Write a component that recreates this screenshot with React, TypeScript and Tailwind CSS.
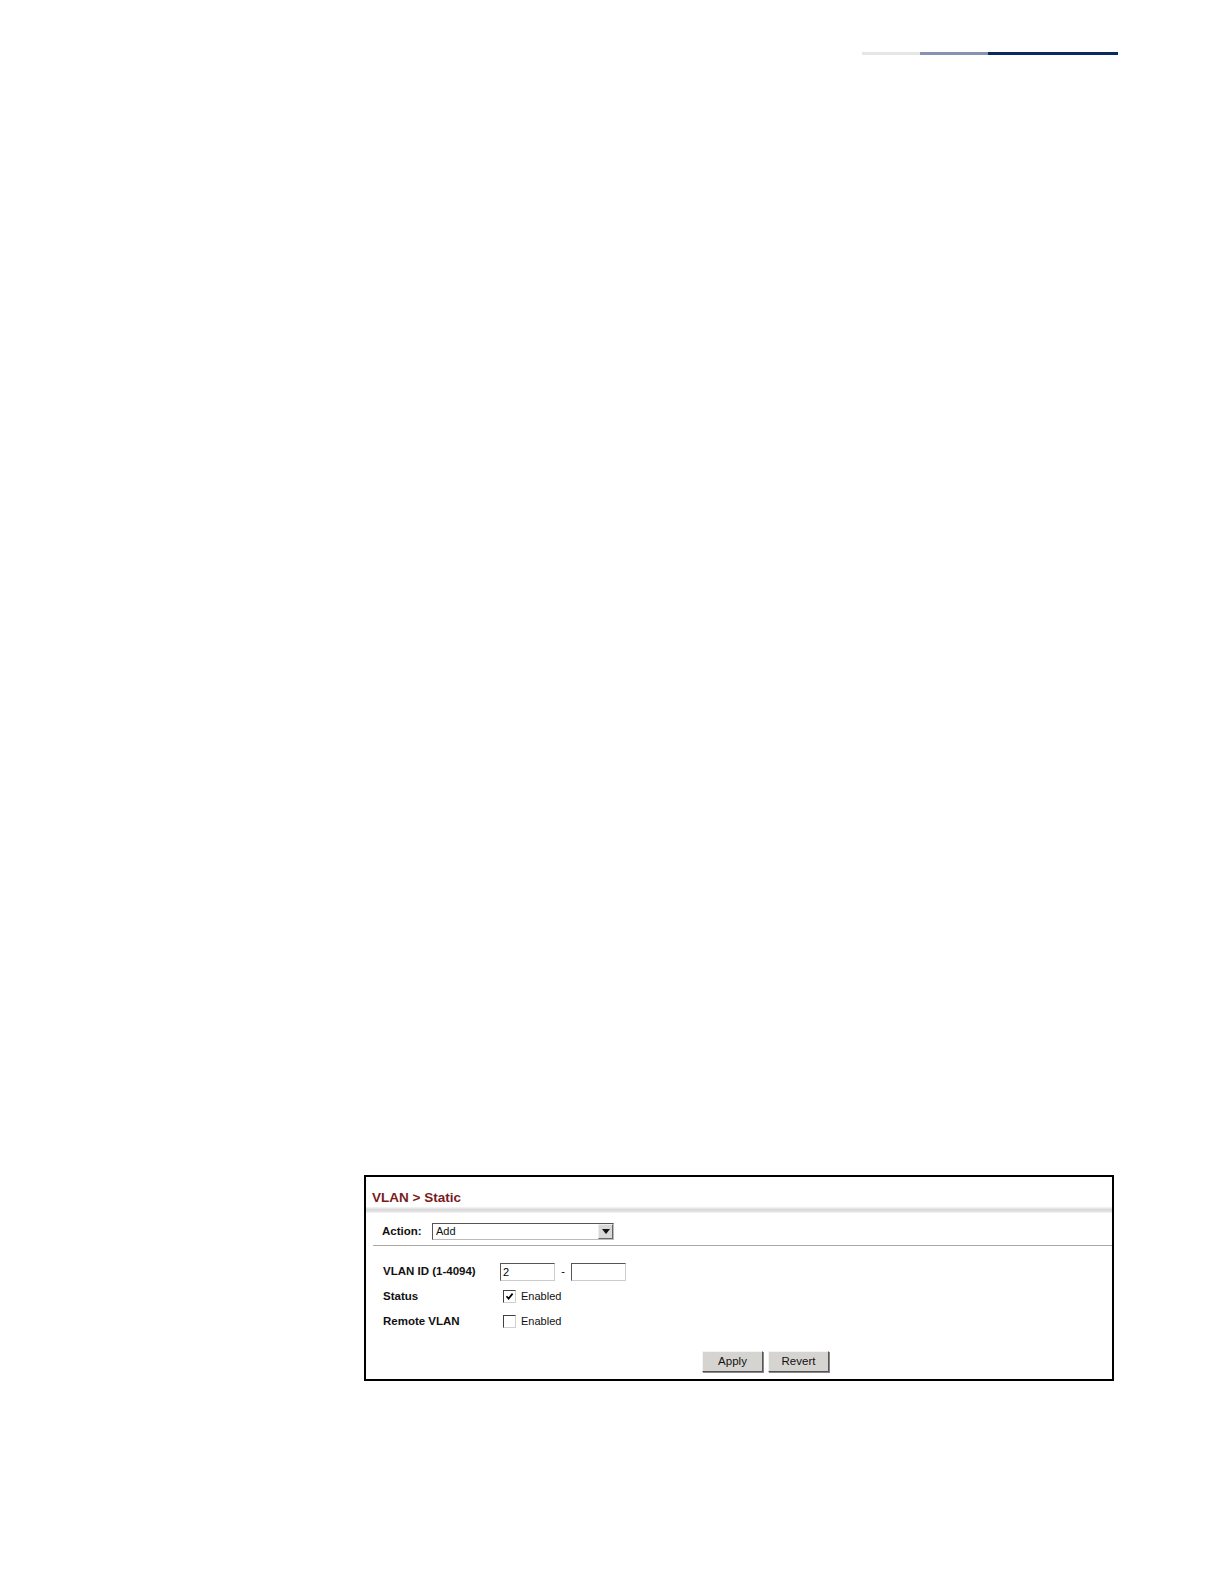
import React from "react";

function Checkbox({ checked }: { checked: boolean }) {
  return (
    <span className="inline-flex h-[13px] w-[13px] items-center justify-center border border-t-[#404040] border-l-[#404040] border-r-[#d0d0d0] border-b-[#d0d0d0] bg-white">
      {checked && (
        <svg width="9" height="9" viewBox="0 0 9 9">
          <path d="M1.5 4.2 L3.6 6.6 L7.6 1.6" fill="none" stroke="#000" strokeWidth="1.7" />
        </svg>
      )}
    </span>
  );
}

function Btn({ label }: { label: string }) {
  return (
    <button className="h-[21px] w-[61px] border border-t-[#f4f4f4] border-l-[#f4f4f4] border-r-[#555] border-b-[#555] bg-[#d6d4d0] text-[11.5px] leading-none text-[#111] shadow-[1px_1px_0_#888]">
      {label}
    </button>
  );
}

export default function App() {
  return (
    <div className="min-h-[1584px] w-[1224px] bg-white" style={{ fontFamily: '"Liberation Sans", Arial, sans-serif' }}>
      <div className="flex justify-end pr-[106px] pt-[52px]">
        <div className="h-[3px] w-[58px] bg-[#e6e6e8]" />
        <div className="h-[3px] w-[68px] bg-[#8891b0]" />
        <div className="h-[3px] w-[130px] bg-[#082a5e]" />
      </div>

      <div className="ml-[364px] mt-[1120px] h-[206px] w-[750px] border-2 border-black">
        <div className="h-[30px] pl-[6px] pt-[12px] text-[13.5px] font-bold leading-[17px] text-[#7a1c1c]">
          VLAN &gt; Static
        </div>
        <div className="h-[6px] w-full bg-gradient-to-b from-[#f6f6f6] via-[#d6d6d6] to-[#f4f4f4]" />
        <div className="flex h-[32px] items-center pl-[16px] pt-[5px]">
          <span className="w-[50px] text-[11.5px] font-bold text-[#111]">Action:</span>
          <div className="flex h-[17px] w-[182px] items-stretch border border-t-[#555] border-l-[#555] border-r-[#bbb] border-b-[#bbb] bg-white">
            <span className="flex-1 pl-[3px] text-[11px] leading-[15px] text-[#111]">Add</span>
            <span className="flex w-[15px] items-center justify-center border border-t-[#eee] border-l-[#eee] border-r-[#666] border-b-[#666] bg-[#d8d8d8]">
              <svg width="8" height="5" viewBox="0 0 8 5">
                <path d="M0 0 H8 L4 5 Z" fill="#111" />
              </svg>
            </span>
          </div>
        </div>
        <div className="ml-[7px] h-[1px] bg-[#a8a8a8]" />
        <div className="pl-[17px] pt-[13px]">
          <div className="flex h-[25px] items-center">
            <span className="w-[117px] text-[11.5px] font-bold text-[#111]">VLAN ID (1-4094)</span>
            <span className="h-[18px] w-[55px] border border-t-[#555] border-l-[#555] border-r-[#ccc] border-b-[#ccc] pl-[2px] text-[11px] leading-[16px]">2</span>
            <span className="w-[16px] text-center text-[11px]">-</span>
            <span className="h-[18px] w-[55px] border border-t-[#555] border-l-[#555] border-r-[#ccc] border-b-[#ccc]" />
          </div>
          <div className="flex h-[25px] items-center">
            <span className="w-[120px] text-[11.5px] font-bold text-[#111]">Status</span>
            <Checkbox checked />
            <span className="ml-[5px] text-[11px] text-[#111]">Enabled</span>
          </div>
          <div className="flex h-[25px] items-center">
            <span className="w-[120px] text-[11.5px] font-bold text-[#111]">Remote VLAN</span>
            <Checkbox checked={false} />
            <span className="ml-[5px] text-[11px] text-[#111]">Enabled</span>
          </div>
        </div>
        <div className="mt-[17px] flex gap-[5px] pl-[336px]">
          <Btn label="Apply" />
          <Btn label="Revert" />
        </div>
      </div>
    </div>
  );
}
